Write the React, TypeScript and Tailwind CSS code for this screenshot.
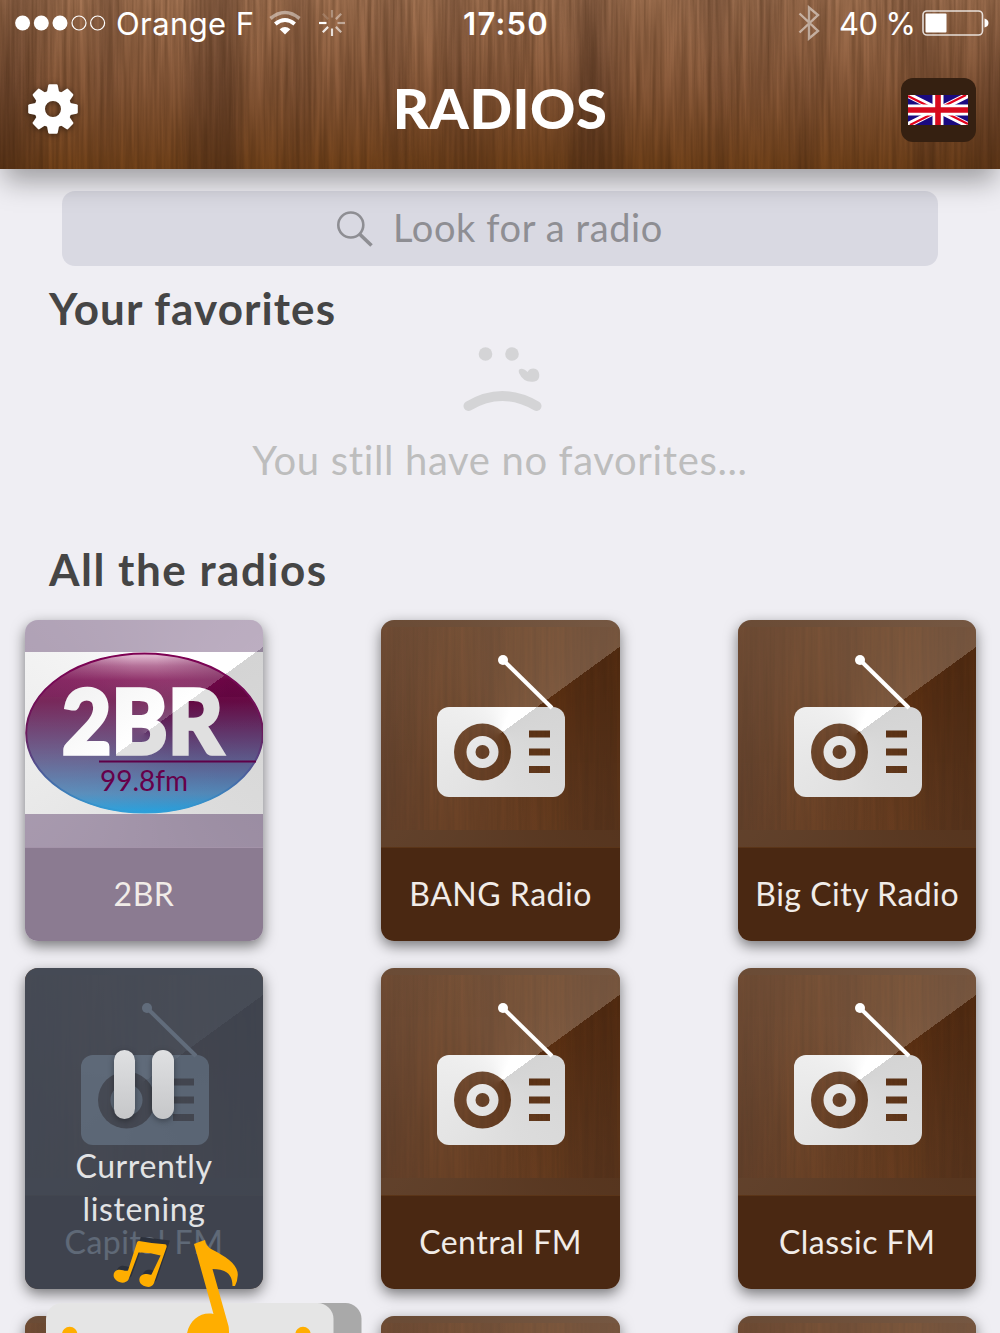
import React from 'react';

type Station = {
  name?: string;
  logo?: '2br';
  playing?: boolean;
};

const stations: Station[] = [
  { name: '2BR', logo: '2br' },
  { name: 'BANG Radio' },
  { name: 'Big City Radio' },
  { name: 'Capital FM', playing: true },
  { name: 'Central FM' },
  { name: 'Classic FM' },
  {},
  {},
  {},
];

// Vertical wood grain: a fine layer for the fibres, a wide one for the darker bands
const Wood: React.FC<{ id: string; className?: string }> = ({ id, className = '' }) => (
  <svg className={`absolute ${className}`} aria-hidden="true">
    <filter id={`${id}-fine`} x="0" y="0" width="100%" height="100%" colorInterpolationFilters="sRGB">
      <feTurbulence type="fractalNoise" baseFrequency="0.25 0.008" numOctaves="3" seed="7" />
      <feColorMatrix values="0 0 0 0 0.22  0 0 0 0 0.12  0 0 0 0 0.04  0.65 0 0 0 -0.17" />
    </filter>
    <filter id={`${id}-wide`} x="0" y="0" width="100%" height="100%" colorInterpolationFilters="sRGB">
      <feTurbulence type="fractalNoise" baseFrequency="0.016 0.002" numOctaves="2" seed="4" />
      <feColorMatrix values="0 0 0 0 0.18  0 0 0 0 0.1  0 0 0 0 0.07  1 0 0 0 -0.42" />
    </filter>
    <rect width="100%" height="100%" filter={`url(#${id}-wide)`} />
    <rect width="100%" height="100%" filter={`url(#${id}-fine)`} />
  </svg>
);

const GearIcon = () => (
  <svg width="52" height="52" viewBox="-26 -26 52 52" className="drop-shadow-[0_1px_3px_rgba(0,0,0,0.5)]">
    <g fill="#fff">
      {[0, 45, 90, 135, 180, 225, 270, 315].map((a) => (
        <path key={a} d="M-6.5 -15L-4.8 -23.6Q-4.5 -24.8 -3.5 -24.8H3.5Q4.5 -24.8 4.8 -23.6L6.5 -15Z" transform={`rotate(${a})`} />
      ))}
    </g>
    <circle r="13.3" fill="none" stroke="#fff" strokeWidth="10.6" />
  </svg>
);

const Flag = () => (
  <svg width="60" height="30" viewBox="0 0 60 30">
    <path fill="#1a0a80" d="M0 0h60v30H0z" />
    <path d="M0 0L60 30M60 0L0 30" stroke="#fff" strokeWidth="6" />
    <path d="M0 1L22 12M60 29L38 18M58 0L36 11M2 30L24 19" stroke="#e3001b" strokeWidth="2.2" />
    <path d="M30 0V30M0 15H60" stroke="#fff" strokeWidth="11" />
    <path d="M30 0V30M0 15H60" stroke="#d80a1e" strokeWidth="5.6" />
  </svg>
);

const StatusBar = () => (
  <div className="flex h-[46px] items-center justify-between pl-[15px] pr-[11px] font-['Inter',sans-serif] text-[31px] leading-none text-white">
    <div className="flex w-[400px] items-center">
      <svg width="91" height="16" viewBox="0 0 91 16">
        <g fill="#fff">
          <circle cx="7.6" cy="8" r="7.5" />
          <circle cx="26.3" cy="8" r="7.5" />
          <circle cx="45" cy="8" r="7.5" />
        </g>
        <g fill="none" stroke="#fff" strokeWidth="1.2">
          <circle cx="64" cy="8" r="7" />
          <circle cx="82.6" cy="8" r="7" />
        </g>
      </svg>
      <span className="ml-[10px] w-[140px] whitespace-nowrap tracking-[0.4px]">Orange F</span>
      <svg className="ml-[13px]" width="32" height="26" viewBox="0 0 32 26" fill="none" stroke="#fff">
        <path d="M1.5 8.5Q16 -3.5 30.5 8.5" strokeWidth="3.6" opacity=".45" />
        <path d="M6.3 14Q16 6 25.7 14" strokeWidth="4" />
        <path d="M10.7 19.2Q16 15 21.3 19.2L16 24.5Z" fill="#fff" stroke="none" />
      </svg>
      <svg className="ml-[17px]" width="28" height="28" viewBox="-14 -14 28 28" stroke="#fff" strokeWidth="2.2">
        {[0.3, 0.4, 0.45, 0.6, 0.8, 0.85, 1, 0.15].map((o, i) => (
          <path key={i} d="M0 -5.5V-13" opacity={o} transform={`rotate(${i * 45})`} />
        ))}
      </svg>
    </div>
    <span className="w-[110px] pl-[8px] text-center font-semibold tracking-[1.2px]">17:50</span>
    <div className="flex w-[400px] items-center justify-end">
      <svg width="22" height="36" viewBox="0 0 22 36" fill="none" stroke="#fff" strokeWidth="2.4" opacity=".5">
        <path d="M1.5 8.5L20 26L11 33.5V2.5L20 10L1.5 27.5" />
      </svg>
      <span className="ml-[19px] w-[75px] whitespace-nowrap text-[31px] tracking-[-0.6px]">40 %</span>
      <svg className="ml-[8px]" width="67" height="26" viewBox="0 0 67 26">
        <rect x="1" y="1" width="59.5" height="24" rx="4" fill="none" stroke="#fff" strokeWidth="1.6" opacity=".8" />
        <rect x="3.5" y="3.5" width="21" height="19" rx="1" fill="#fff" />
        <path d="M62.5 8.5Q66.5 9.5 66.5 13T62.5 17.5Z" fill="#fff" />
      </svg>
    </div>
  </div>
);

const Header = () => (
  <header className="relative z-10 h-[169px] shrink-0 bg-linear-to-b from-[#a57554] via-[#8b5b3b] to-[#714118] shadow-[0_16px_26px_-4px_rgba(0,0,0,0.34)]">
    <Wood id="header" className="left-0 top-0 h-full w-full" />
    <div className="relative">
      <StatusBar />
      <div className="flex h-[126px] items-center justify-between pl-[27px] pr-[24px]">
        <button className="flex w-[75px]">
          <GearIcon />
        </button>
        <h1 className="mb-[3px] mr-[3px] font-['Lato',sans-serif] text-[56px] font-black leading-none tracking-[0.5px] text-white">RADIOS</h1>
        <button className="mb-[-2px] flex h-[64px] w-[75px] items-center justify-center rounded-[12px] bg-[#352011]">
          <Flag />
        </button>
      </div>
    </div>
  </header>
);

const SadFace = () => (
  <svg width="80" height="68" viewBox="0 0 80 68" fill="#d4d4d6">
    <circle cx="23.5" cy="9" r="6.8" />
    <circle cx="50" cy="9" r="6.8" />
    <path d="M57.5 24.3Q60.5 22.3 65.5 27Q67.5 23.5 71.5 23.6A6.6 6.6 0 0 1 72.5 36.5Q62 38.5 57 28Q56 25.5 57.5 24.3Z" />
    <path d="M6.5 61Q40 41 74.5 61" fill="none" stroke="#d4d4d6" strokeWidth="10" strokeLinecap="round" />
  </svg>
);

const RadioDrawing = ({ id }: { id: string }) => (
  <svg className="absolute inset-0" width="239" height="227" viewBox="0 0 239 227">
    <mask id={`${id}-body`}>
      <rect x="56" y="87" width="128" height="90" rx="12" fill="#fff" />
      <circle cx="101.5" cy="132" r="28.5" fill="#000" />
      <circle cx="101.5" cy="132" r="16" fill="#fff" />
      <circle cx="101.5" cy="132" r="7" fill="#000" />
      <path d="M148 110.5h21v7h-21zM148 128.5h21v7h-21zM148 146h21v7h-21z" fill="#000" />
    </mask>
    <g mask={`url(#${id}-body)`}>
      <foreignObject width="239" height="227">
        <div className="h-full w-full bg-[conic-gradient(from_54deg_at_50%_50%,#d4d4d4,#dcdcdc_30%,#e8e8e8_55%,#f2f2f2_75%,#ffffff_92%)]" />
      </foreignObject>
    </g>
    <circle cx="122" cy="40" r="5" fill="#fff" />
    <path d="M122 40L171 88" stroke="#fff" strokeWidth="4" />
  </svg>
);

const Logo2BR = () => (
  <svg className="absolute inset-0" width="239" height="227" viewBox="0 0 239 227">
    <defs>
      <linearGradient id="oval" x1="0" y1="0" x2="0" y2="1">
        <stop offset="0.02" stopColor="#d7a5c2" />
        <stop offset="0.08" stopColor="#a65584" />
        <stop offset="0.17" stopColor="#7a0b4e" />
        <stop offset="0.3" stopColor="#640842" />
        <stop offset="0.68" stopColor="#58588a" />
        <stop offset="0.88" stopColor="#4a83b5" />
        <stop offset="1" stopColor="#169bdc" />
      </linearGradient>
      <linearGradient id="oval-sides" x1="0" y1="0" x2="1" y2="0">
        <stop offset="0.1" stopColor="#6a0045" />
        <stop offset="0.45" stopColor="#6a0045" stopOpacity="0" />
        <stop offset="0.55" stopColor="#6a0045" stopOpacity="0" />
        <stop offset="0.85" stopColor="#5a003a" />
      </linearGradient>
      <linearGradient id="rim" x1="0" y1="0" x2="0" y2="1">
        <stop offset="0" stopColor="#7d0052" />
        <stop offset="0.5" stopColor="#6a1a5c" />
        <stop offset="1" stopColor="#2f9fd8" />
      </linearGradient>
      <linearGradient id="letters" gradientUnits="userSpaceOnUse" x1="72" y1="48" x2="167" y2="179">
        <stop offset="0" stopColor="#f2f2f2" />
        <stop offset="0.5" stopColor="#ffffff" />
        <stop offset="0.5" stopColor="#e0e0e0" />
      </linearGradient>
      <clipPath id="oval-clip">
        <ellipse cx="119.5" cy="113" rx="118.5" ry="80" />
      </clipPath>
      <clipPath id="oval-top">
        <rect y="33" width="239" height="44" />
      </clipPath>
    </defs>
    <foreignObject y="32" width="239" height="162">
      <div className="h-full w-full bg-[conic-gradient(from_54deg_at_50%_50%,#d4d4d4,#dedede_30%,#ebebeb_55%,#f5f5f5_75%,#ffffff_92%)]" />
    </foreignObject>
    <ellipse cx="119.5" cy="113" rx="118.5" ry="80" fill="url(#oval)" />
    <ellipse cx="119.5" cy="113" rx="118.5" ry="80" fill="url(#oval-sides)" clipPath="url(#oval-top)" opacity="0.5" />
    <g clipPath="url(#oval-clip)">
      <foreignObject width="239" height="227">
        <div className="h-full w-full bg-[conic-gradient(from_54deg_at_50%_50%,rgba(255,255,255,0),rgba(255,255,255,0.2))]" />
      </foreignObject>
    </g>
    <ellipse cx="119.5" cy="113" rx="118.3" ry="79.5" fill="none" stroke="url(#rim)" strokeWidth="2" />
    <path d="M74 141.5H231" stroke="#5e0048" strokeWidth="1.8" />
    <g fontFamily="Lato, sans-serif">
      <text x="37" y="134" fontSize="90" fontWeight="900" fill="url(#letters)" stroke="url(#letters)" strokeWidth="3.5" textLength="161" lengthAdjust="spacingAndGlyphs">2BR</text>
      <text x="75" y="171" fontSize="29" fill="#66004a" textLength="88" lengthAdjust="spacingAndGlyphs">99.8fm</text>
    </g>
  </svg>
);

const PlayingOverlay = () => (
  <div className="absolute inset-0 flex flex-col items-center bg-[rgba(60,74,92,0.81)] pt-[82px]">
    <div className="flex gap-[17px]">
      <div className="h-[69px] w-[21.5px] rounded-full bg-linear-to-b from-[#dfe0e2] to-[#c6c7c9] shadow-[0_2px_6px_rgba(0,0,0,0.35)]" />
      <div className="h-[69px] w-[21.5px] rounded-full bg-linear-to-b from-[#dfe0e2] to-[#c6c7c9] shadow-[0_2px_6px_rgba(0,0,0,0.35)]" />
    </div>
    <p className="mt-[25px] text-center text-[32px] leading-[43px] tracking-[0.6px] text-[#e2e3e5]">
      Currently
      <br />
      listening
    </p>
  </div>
);

const StationCard: React.FC<{ station: Station; index: number }> = ({ station, index }) => {
  const id = `station-${index}`;
  const branded = station.logo === '2br';

  return (
    <article className="relative h-[321px] overflow-hidden rounded-[13px]">
      <div className={`relative h-[227px] ${branded ? 'bg-[#93859b]' : 'bg-[#4f2d16]'}`}>
        {!branded && <Wood id={id} className="left-0 top-[7px] h-[203px] w-full bg-linear-to-r from-[#653415] to-[#613110] opacity-70" />}
        <div
          className={`absolute inset-0 ${
            branded
              ? 'bg-[conic-gradient(from_54deg_at_50%_50%,rgba(255,255,255,0),rgba(255,240,255,0.38))]'
              : 'bg-[conic-gradient(from_54deg_at_50%_50%,rgba(255,240,225,0),rgba(255,240,225,0.05)_25%,rgba(255,240,225,0.22))]'
          }`}
        />
        {branded ? <Logo2BR /> : <RadioDrawing id={id} />}
      </div>
      <div
        className={`flex h-[94px] items-center justify-center whitespace-nowrap border-t pb-[2px] text-[32px] tracking-[0.5px] text-[#f1ece8] ${
          branded ? 'border-[#a493a9] bg-[#8b7b91]' : 'border-[#5b3518] bg-[#4a2812]'
        }`}
      >
        {station.name}
      </div>
      {station.playing && <PlayingOverlay />}
    </article>
  );
};

// Robot player peeking in from the bottom edge
const PlayerPeek = () => (
  <svg className="absolute bottom-0 left-[46px]" width="316" height="98" viewBox="46 1235 316 98">
    <rect x="150" y="1303" width="211.5" height="60" rx="16" fill="#a9a9a9" />
    <rect x="46" y="1303" width="287.5" height="60" rx="16" fill="#e5e5e5" />
    <circle cx="69.7" cy="1334.5" r="7.7" fill="#ffae00" />
    <circle cx="303" cy="1334.5" r="7.7" fill="#ffae00" />
    <path
      transform="translate(3 -4)"
      fill="#2b303b"
      d="M138 1241L167 1244.5L153.5 1284C151 1288 145 1288 141 1284.5C138 1281 139.5 1275.5 144 1274C148 1273 150 1275 151.5 1274L160.5 1255.5L138.5 1252L128.5 1280C126 1284 120 1284 115.5 1280C112 1276 114.5 1270.5 119 1269.8C122.5 1269.5 126 1272 128 1270.5Z"
    />
    <path
      fill="#ffae00"
      d="M139 1241Q152 1243.5 165 1244.3Q167 1244.6 166.6 1247L153.8 1283.5C152 1287.5 147.5 1287.6 143.5 1285.8C138.5 1283.5 138 1277.5 142 1275C146 1272.5 149.5 1275.5 151.5 1274.5L160.6 1255.5Q149 1252 138.5 1252.5L128.5 1279.5C126 1283.5 120.5 1283.5 116.5 1280.5C112 1277 113 1271.5 117.5 1270C121.5 1269 125.5 1271.8 128 1270.5L136.5 1244Q137 1241 139 1241Z"
    />
    <path
      fill="#ffae00"
      d="M194 1244Q200 1241.5 205 1240Q205.5 1246 212 1249.5C227 1257 238 1265 237.8 1275Q237.5 1281.5 235 1286H232.5C232.5 1275 227 1269 212.5 1269L228.5 1326Q229.5 1330 228.5 1340H186.5C186 1322 200 1311 213.5 1314Z"
    />
  </svg>
);

const App: React.FC = () => {
  return (
    <div className="relative flex h-[1333px] w-[1000px] flex-col overflow-hidden bg-[#efeef3] font-['Lato','Open_Sans',sans-serif]">
      <Header />

      <main className="flex flex-col">
        <div className="mx-[62px] mt-[22px] flex h-[75px] items-center justify-center rounded-[13px] bg-[#d9d9e2] text-[#8e8e93]">
          <svg width="36" height="36" viewBox="0 0 36 36" fill="none" stroke="currentColor">
            <circle cx="13.8" cy="14" r="12.5" strokeWidth="2.6" />
            <path d="M22.5 23L34.5 34.5" strokeWidth="3.6" />
          </svg>
          <span className="mb-[3px] ml-[20px] text-[38px] leading-none tracking-[0.6px]">Look for a radio</span>
        </div>

        <section className="flex h-[250px] flex-col">
          <h2 className="ml-[49px] mt-[15px] text-[44px] font-bold leading-[54px] tracking-[1.1px] text-[#454545]">Your favorites</h2>
          <div className="mt-[10px] flex flex-col items-center">
            <div className="ml-[3px]">
              <SadFace />
            </div>
            <p className="mt-[23px] text-[40px] leading-[48px] tracking-[0.65px] text-[#bdbdbd]">You still have no favorites...</p>
          </div>
        </section>

        <section>
          <h2 className="ml-[49px] mt-[26px] text-[44px] font-bold leading-[54px] tracking-[1.5px] text-[#454545]">All the radios</h2>
          <div className="mt-[24px] grid grid-cols-[238.6px_238.6px_238.6px] gap-x-[118px] gap-y-[27.2px] px-[24.7px]">
            {stations.map((station, i) => (
              <div key={i} className="rounded-[13px] shadow-[0_5px_14px_rgba(0,0,0,0.5)]">
                <StationCard station={station} index={i} />
              </div>
            ))}
          </div>
        </section>
      </main>

      <PlayerPeek />
    </div>
  );
};

export default App;
